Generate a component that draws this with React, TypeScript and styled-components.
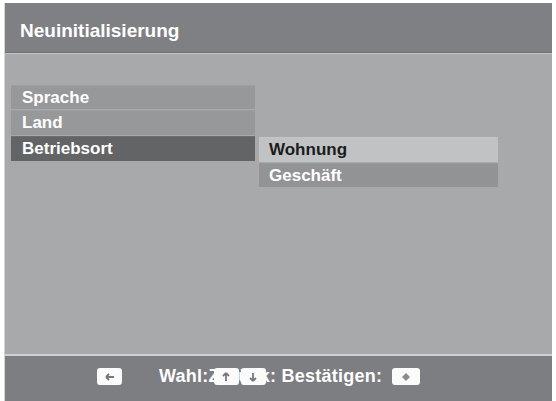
import React from "react";
import styled, { createGlobalStyle } from "styled-components";

const Global = createGlobalStyle`
  html, body { margin: 0; padding: 0; background: #ffffff; }
  body { font-family: "Liberation Sans", Arial, sans-serif; overflow: hidden; }
`;

const Screen = styled.div`
  margin: 3px 0 0 4px;
  width: 548px;
  height: 398px;
  display: flex;
  flex-direction: column;
  border-left: 1px solid #d4d5d6;
  box-sizing: border-box;
  box-shadow: inset -6px 0 0 rgba(0, 0, 0, 0.035);
`;

const Header = styled.div`
  height: 50px;
  box-sizing: border-box;
  background: #7f8083;
  border-bottom: 1px solid #6f7072;
  display: flex;
  align-items: center;
  padding: 7px 0 0 15px;
  color: #ffffff;
  font-weight: bold;
  font-size: 19px;
`;

const HeaderGap = styled.div`
  height: 1px;
  background: #c4c5c7;
`;

const Body = styled.div`
  flex: 1;
  background: #a8a9ab;
  display: flex;
  align-items: flex-start;
  padding: 31px 0 0 6px;
  gap: 4px;
`;

const Menu = styled.div<{ $top?: number }>`
  display: flex;
  flex-direction: column;
  gap: 1px;
  width: ${(p) => (p.$top ? 239 : 244)}px;
  margin-top: ${(p) => p.$top ?? 0}px;
`;

const Row = styled.div<{ $bg: string; $fg: string; $h?: number; $pad?: number }>`
  height: ${(p) => p.$h ?? 25}px;
  background: ${(p) => p.$bg};
  color: ${(p) => p.$fg};
  display: flex;
  align-items: center;
  padding-left: ${(p) => p.$pad ?? 11}px;
  font-weight: bold;
  font-size: 17px;
  box-sizing: border-box;
  border-top: 1px solid rgba(255, 255, 255, 0.06);
`;

const FooterLine = styled.div`
  height: 2px;
  background: #cfd0d1;
  margin-top: -1px;
`;

const Footer = styled.div`
  height: 45px;
  flex: none;
  background: #7d7e81;
  display: flex;
  align-items: center;
  padding: 0 0 4px 92px;
  box-sizing: border-box;
  color: #ffffff;
  font-weight: bold;
  font-size: 18px;
  letter-spacing: 0.25px;
`;

const Key = styled.span<{ $w?: number }>`
  display: inline-flex;
  align-items: center;
  justify-content: center;
  width: ${(p) => p.$w ?? 25}px;
  height: 17px;
  background: #fbfbfb;
  border-radius: 3px;
  color: #7a7b7e;
  font-size: 11px;
  line-height: 1;
`;

const Label = styled.span`
  margin-left: 37px;
  white-space: nowrap;
`;

const Overlay = styled.span`
  position: relative;
  display: inline-block;
`;

const OverKey = styled(Key)<{ $left: number }>`
  position: absolute;
  left: ${(p) => p.$left}px;
  top: 2px;
`;

const Tail = styled.span`
  margin-left: 10px;
  display: inline-flex;
`;

const Arrow = ({ dir }: { dir: "left" | "up" | "down" }) => {
  const rot = dir === "left" ? 0 : dir === "up" ? 90 : -90;
  return (
    <svg width="10" height="8" viewBox="0 0 10 8" style={{ transform: `rotate(${rot}deg)` }}>
      <path d="M1 4h8M1 4l3-3M1 4l3 3" stroke="#77787b" strokeWidth="1.8" fill="none" />
    </svg>
  );
};

const OkGlyph = () => (
  <svg width="10" height="10" viewBox="0 0 10 10">
    <path d="M5 1l4 4-4 4-4-4z" fill="#8a8b8e" />
  </svg>
);

export default function App() {
  return (
    <>
      <Global />
      <Screen>
        <Header>Neuinitialisierung</Header>
        <HeaderGap />
        <Body>
          <Menu>
            <Row $bg="#97989a" $fg="#ffffff" $h={24}>Sprache</Row>
            <Row $bg="#97989a" $fg="#ffffff" $h={25}>Land</Row>
            <Row $bg="#636466" $fg="#ffffff" $h={25}>Betriebsort</Row>
          </Menu>
          <Menu $top={52}>
            <Row $bg="#c1c2c4" $fg="#1c1c1c" $h={25} $pad={10}>Wohnung</Row>
            <Row $bg="#929395" $fg="#ffffff" $h={24} $pad={10}>Geschäft</Row>
          </Menu>
        </Body>
        <FooterLine />
        <Footer>
          <Key>
            <Arrow dir="left" />
          </Key>
          <Label>
            Wahl:
            <Overlay>
              Zurück
              <OverKey $left={5}>
                <Arrow dir="up" />
              </OverKey>
              <OverKey $left={32}>
                <Arrow dir="down" />
              </OverKey>
            </Overlay>
            : Bestätigen:
          </Label>
          <Tail>
            <Key $w={28}>
              <OkGlyph />
            </Key>
          </Tail>
        </Footer>
      </Screen>
    </>
  );
}
